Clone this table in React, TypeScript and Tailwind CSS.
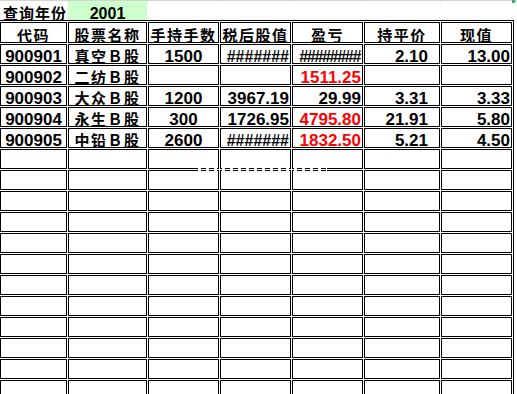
import React from "react";

const COLS = "grid-cols-[67px_79px_71px_71px_71px_76px_71px]";
const NUM = "font-['Liberation_Sans',Arial,sans-serif] font-bold leading-[12px] whitespace-nowrap";
const CJK = "font-['Noto_Sans_CJK_SC',sans-serif] font-bold text-[15px] leading-[15px] whitespace-nowrap";

type Row = {
  code: string;
  name: string;
  qty: string;
  after: string;
  pl: string;
  plRed: boolean;
  avg: string;
  now: string;
};

const rows: Row[] = [
  { code: "900901", name: "真空Ｂ股", qty: "1500", after: "#######", pl: "########", plRed: false, avg: "2.10", now: "13.00" },
  { code: "900902", name: "二纺Ｂ股", qty: "", after: "", pl: "1511.25", plRed: true, avg: "", now: "" },
  { code: "900903", name: "大众Ｂ股", qty: "1200", after: "3967.19", pl: "29.99", plRed: false, avg: "3.31", now: "3.33" },
  { code: "900904", name: "永生Ｂ股", qty: "300", after: "1726.95", pl: "4795.80", plRed: true, avg: "21.91", now: "5.80" },
  { code: "900905", name: "中铅Ｂ股", qty: "2600", after: "#######", pl: "1832.50", plRed: true, avg: "5.21", now: "4.50" },
];

function Cell({ children, className = "" }: { children?: React.ReactNode; className?: string }) {
  return (
    <div className={`border border-black bg-white flex items-end ${className}`}>
      {children}
    </div>
  );
}

function Num({ v, className = "" }: { v: string; className?: string }) {
  if (!v) return null;
  const hash = v.startsWith("#");
  const size = hash
    ? v.length === 8
      ? "text-[16px] tracking-[-1.3px] mr-[1px]"
      : "text-[16px]"
    : "text-[17px]";
  return <span className={`${NUM} ${size} ${className}`}>{v}</span>;
}

export default function App() {
  const headers = ["代码", "股票名称", "手持手数", "税后股值", "盈亏", "持平价", "现值"];
  const blanks = Array.from({ length: 13 });
  return (
    <div className="relative w-[517px] h-[394px] overflow-hidden bg-white text-black">
      {/* gridline strip */}
      <div className={`grid ${COLS} gap-x-px h-[2px] bg-[#d4d4d4] items-end`}>
        <div className="h-px bg-white" />
        <div className="h-px bg-[#ccffcc]" />
        <div className="h-px bg-white" />
        <div className="h-px bg-white" />
        <div className="h-px bg-white" />
        <div className="h-px bg-white" />
        <div className="h-px bg-white" />
      </div>
      {/* query row */}
      <div className={`grid ${COLS} gap-x-px h-[18px]`}>
        <div className="flex items-end pl-[3px]">
          <span className={`${CJK} tracking-[1px]`}>查询年份</span>
        </div>
        <div className="flex items-end justify-center bg-[#ccffcc]">
          <span className={`${NUM} text-[16px]`}>2001</span>
        </div>
      </div>
      {/* table */}
      <div className="w-[514px] border-t border-r border-black pt-px pr-px">
        <div className={`grid ${COLS} gap-px grid-rows-[21px] auto-rows-[20px]`}>
          {headers.map((h) => (
            <Cell key={h} className="justify-center">
              <span className={`${CJK} tracking-[1.5px]`}>{h}</span>
            </Cell>
          ))}
          {rows.map((r) => (
            <React.Fragment key={r.code}>
              <Cell className="justify-center">
                <Num v={r.code} />
              </Cell>
              <Cell className="justify-center">
                <span className={`${CJK} tracking-[1.5px]`}>{r.name}</span>
              </Cell>
              <Cell className="justify-center">
                <Num v={r.qty} />
              </Cell>
              <Cell className="justify-end pr-px">
                <Num v={r.after} />
              </Cell>
              <Cell className="justify-end pr-px">
                <Num v={r.pl} className={r.plRed ? "text-[#ff0000]" : ""} />
              </Cell>
              <Cell className="justify-end pr-[11px]">
                <Num v={r.avg} />
              </Cell>
              <Cell className="justify-end pr-px">
                <Num v={r.now} />
              </Cell>
            </React.Fragment>
          ))}
          {blanks.map((_, i) => (
            <React.Fragment key={i}>
              <Cell />
              <Cell />
              <Cell />
              <Cell />
              <Cell />
              <Cell />
              <Cell />
            </React.Fragment>
          ))}
        </div>
      </div>
      {/* selection marker */}
      <div className="absolute left-[512px] top-0 w-[3px] h-[3px] bg-[#3cb371]" />
      {/* page break dashes */}
      <div className="absolute left-[193px] top-[168px] w-[134px] h-[3px] bg-[repeating-linear-gradient(90deg,transparent_0px,transparent_5px,white_5px,white_8px)]" />
    </div>
  );
}
